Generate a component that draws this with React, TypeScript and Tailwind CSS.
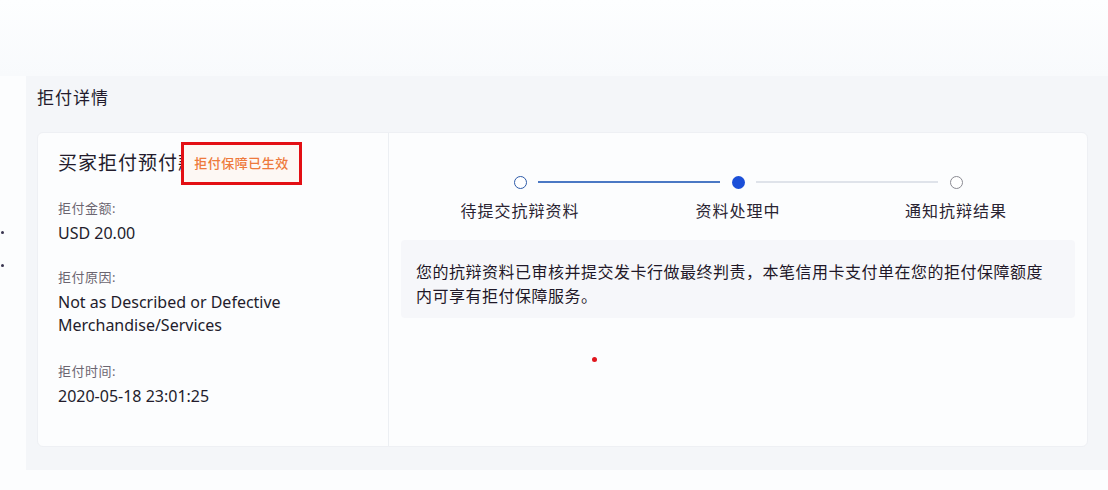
import React from "react";

const font = { fontFamily: '"Noto Sans", "Noto Sans CJK SC", sans-serif' };

const steps = [
  { label: "待提交抗辩资料", state: "done" },
  { label: "资料处理中", state: "active" },
  { label: "通知抗辩结果", state: "todo" },
];

const Field = ({ label, gap = "mt-[24px]", children }: { label: string; gap?: string; children: React.ReactNode }) => (
  <div className={gap}>
    <div className="text-[13px] leading-[16px] tracking-[0.5px] text-[#6b6570]">{label}</div>
    <div className="mt-[6px] text-[16px] leading-[23px] text-[#231c2c]">{children}</div>
  </div>
);

export default function App() {
  return (
    <div className="relative w-[1108px] h-[490px] bg-[#fcfdfe] overflow-hidden flex flex-col" style={font}>
      <div className="absolute left-[1px] top-[231px] w-[3px] h-[3px] rounded-full bg-[#3a3550]" />
      <div className="absolute left-[1px] top-[264px] w-[3px] h-[3px] rounded-full bg-[#3a3550]" />
      <div className="h-[76px] shrink-0 bg-gradient-to-b from-[#fdfeff] to-[#f8fafc]" />
      <div className="ml-[26px] h-[394px] bg-[#f4f6f9] pl-[11px] pr-[20px] pt-[10px] relative">
        <h2 className="text-[17px] leading-[24px] tracking-[1px] text-[#221a2c] m-0 font-normal">拒付详情</h2>
        <div className="mt-[22px] h-[315px] w-[1051px] bg-[#fcfdfe] rounded-[6px] border border-[#eef0f4] flex">
          <div className="w-[351px] shrink-0 border-r border-[#eceff3] pl-[20px] pt-[17px] relative">
            <div className="text-[19px] leading-[26px] tracking-[1px] text-[#231c2c] whitespace-nowrap">买家拒付预付款</div>
            <div className="absolute left-[143px] top-[9px] w-[121px] h-[43px] border-[3px] border-[#e30f14] bg-[#fdf8f4] flex items-center justify-center">
              <span className="text-[13px] tracking-[0.5px] text-[#ee7a3c] font-medium">拒付保障已生效</span>
            </div>
            <Field label="拒付金额:">USD 20.00</Field>
            <Field label="拒付原因:">
              Not as Described or Defective
              <br />
              Merchandise/Services
            </Field>
            <Field label="拒付时间:" gap="mt-[26px]">
              2020-05-18 23:01:25
            </Field>
          </div>
          <div className="flex-1 pt-[42px] px-[12px] relative">
            <div className="flex items-start justify-between px-[109px]">
              {steps.map((s, i) => (
                <React.Fragment key={s.label}>
                  <div className="flex flex-col items-center w-[20px]">
                    <div className="h-[14px] flex items-center">
                      {s.state === "active" ? (
                        <div className="w-[13px] h-[13px] rounded-full bg-[#1b4fd8]" />
                      ) : (
                        <div
                          className={
                            "w-[13px] h-[13px] rounded-full border-[1.5px] bg-white " +
                            (s.state === "done" ? "border-[#2d5aa8]" : "border-[#8a8a92]")
                          }
                        />
                      )}
                    </div>
                    <div className="mt-[10px] text-[16px] leading-[24px] tracking-[1px] whitespace-nowrap text-[#2a2432]">
                      {s.label}
                    </div>
                  </div>
                  {i < steps.length - 1 && (
                    <div
                      className={
                        "flex-1 mt-[6px] mx-[8px] h-[2px] " + (i === 0 ? "bg-[#4b78c4]" : "bg-[#dfe3ea]")
                      }
                    />
                  )}
                </React.Fragment>
              ))}
            </div>
            <div className="mt-[17px] bg-[#f6f7fa] rounded-[4px] px-[15px] pt-[20px] pb-[10px] text-[16px] leading-[24px] tracking-[0.5px] whitespace-nowrap text-[#1f1828]">
              您的抗辩资料已审核并提交发卡行做最终判责，本笔信用卡支付单在您的拒付保障额度
              <br />
              内可享有拒付保障服务。
            </div>
            <div className="absolute left-[203px] top-[224px] w-[5px] h-[5px] rounded-full bg-[#e0161e]" />
          </div>
        </div>
      </div>
    </div>
  );
}
